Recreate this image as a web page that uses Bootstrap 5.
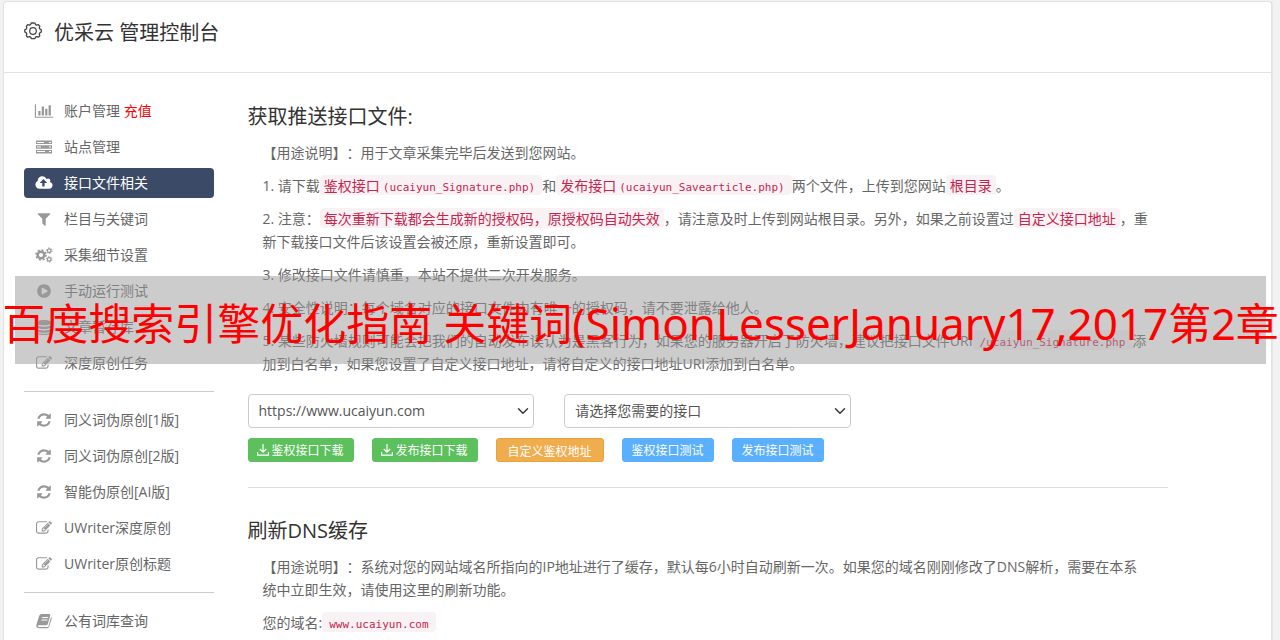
<!DOCTYPE html>
<html lang="zh-CN">
<head>
<meta charset="utf-8">
<meta name="viewport" content="width=device-width, initial-scale=1">
<title>优采云 管理控制台</title>
<link href="https://cdn.jsdelivr.net/npm/bootstrap@5.3.0/dist/css/bootstrap.min.css" rel="stylesheet">
<style>
body{background:#f2f2f2;color:#666;font:14px/23px "Open Sans","Noto Sans CJK SC",sans-serif;text-spacing-trim:space-all}
.page{padding:1px 8px 0 3px}
.panel{background:#fff;border:1px solid #e2e2e2;border-bottom:0;border-radius:4px 4px 0 0;box-shadow:1px 0 0 #e6e6e6;min-height:calc(100vh - 1px)}
.panel-top{height:71px;padding:15px 20px;border-bottom:1px solid #e2e2e2}
.panel-top h1{font-size:20px;line-height:32px;color:#333;font-weight:400}
.panel-main{padding:23px 20px 0}
.side{padding-right:15px}
.side .nav{gap:6px}
.side .nav-link{display:flex;align-items:center;height:30px;padding:0 10px 2px;border-radius:4px;color:#666;white-space:nowrap}
.side .nav-link svg{width:20px;height:16px;margin:2px 10px 0 0;fill:#999;flex:none}
.side .nav-link.active{background:#3b4a66;color:#fff}
.side .nav-link.active svg{fill:#fff}
.side hr{margin:7px 0;border-color:#ccc;opacity:1}
.side .recharge{color:#f00}
.content{margin-left:19px}
.content h2{font-size:20px;line-height:24px;color:#333;font-weight:400;margin:9px 0 12px}
.content p{margin:0 17px 10px 15px}
.content code{font:14px/18px "Noto Sans CJK SC",sans-serif;color:#c7254e;background:#f9f2f4;border-radius:4px;padding:0 4px}
.content code span{font:11px/18px "DejaVu Sans Mono",monospace;padding:0 3px}
.content .form-select{height:34px;padding:0 28px 0 10px;font-size:14px;line-height:32px;color:#555;border-color:#ccc;border-radius:4px;background-position:right 4px center;background-size:12px 12px}
.pickers{--bs-gutter-x:30px;padding-top:9px}
.tools{gap:18px;margin-top:10px}
.tools .btn{--bs-btn-padding-y:0;--bs-btn-padding-x:9px;--bs-btn-font-size:12px;--bs-btn-border-radius:3px;height:24px;line-height:20px;padding-top:2px;display:flex;align-items:center;white-space:nowrap;color:#fff}
.tools svg{width:12px;height:12px;margin:0 3px 2px 0}
.tools .b-green{padding-left:8px;background:#5cc05c;border-color:#5cc05c}
.tools .b-orange{padding:3px 11px 0;background:#f0ad4e;border-color:#eea236}
.tools .b-blue{background:#5aafff;border-color:#5aafff}
.split{margin:25px 0 31px;border-color:#ddd;opacity:1}
.notice{left:15px;right:14px;top:276px;height:88px;background:rgba(153,153,153,.5);color:#f00;pointer-events:none}
.notice-text{font:43px/94px "Noto Sans","Noto Sans CJK SC",sans-serif;white-space:nowrap;flex:none}
.notice-latin{font-size:44px}
</style>
</head>
<body class="position-relative overflow-x-hidden">
<svg class="d-none" xmlns="http://www.w3.org/2000/svg">
<symbol id="i-chart" viewBox="0 0 2048 1792"><path d="M640 896v512h-256v-512h256zm384-512v1024h-256v-1024h256zm1024 1152v128h-2048v-1536h128v1408h1920zm-640-896v768h-256v-768h256zm384-384v1152h-256v-1152h256z"/></symbol>
<symbol id="i-server" viewBox="0 0 16 16"><path fill-rule="evenodd" d="M0 1.500h16v3.600H0zM1 3v1h7V3zm12 0v1h2V3zM0 6.200h16v3.600H0zM1 7.500v1h4v-1zm12 0v1h2v-1zM0 10.900h16v3.600H0zM1 12v1h8v-1zm12 0v1h2v-1z"/></symbol>
<symbol id="i-cloud" viewBox="0 0 1920 1792"><path d="M1280 864q0-14-9-23l-352-352q-9-9-23-9t-23 9l-351 351q-10 12-10 24 0 14 9 23t23 9h224v352q0 13 9.500 22.500t22.500 9.500h192q13 0 22.500-9.500t9.500-22.500v-352h224q13 0 22.500-9.500t9.500-22.500zm640 288q0 159-112.500 271.500t-271.500 112.500h-1088q-185 0-316.500-131.500t-131.500-316.500q0-130 70-240t188-165q-2-30-2-43 0-212 150-362t362-150q156 0 285.500 87t188.500 231q71-62 166-62 106 0 181 75t75 181q0 76-41 138 130 31 213.500 135.500t83.500 238.500z"/></symbol>
<symbol id="i-filter" viewBox="0 0 1792 1792"><path d="M1595 295q17 41-14 70l-493 493v742q0 42-39 59-13 5-25 5-27 0-45-19l-256-256q-19-19-19-45v-486l-493-493q-31-29-14-70 17-39 59-39h1280q42 0 59 39z"/></symbol>
<symbol id="i-cogs" viewBox="0 0 18 16"><g fill="none" stroke="#999"><circle cx="6" cy="8" r="3.300" stroke-width="2.400"/><circle cx="6" cy="8" r="5" stroke-width="1.600" stroke-dasharray="1.960 1.960"/><circle cx="14.200" cy="3.700" r="1.800" stroke-width="1.300"/><circle cx="14.200" cy="3.700" r="2.800" stroke-width="1" stroke-dasharray="1.460 1.460"/><circle cx="14.200" cy="12.400" r="1.800" stroke-width="1.300"/><circle cx="14.200" cy="12.400" r="2.800" stroke-width="1" stroke-dasharray="1.460 1.460"/></g></symbol>
<symbol id="i-play" viewBox="0 0 1792 1792"><path d="M896 128q209 0 385.500 103t279.500 279.500 103 385.500-103 385.500-279.500 279.500-385.500 103-385.500-103-279.500-279.500-103-385.500 103-385.500 279.500-279.500 385.500-103zm384 823q32-18 32-55t-32-55l-544-320q-31-19-64-1-32 19-32 56v640q0 37 32 56 16 8 32 8 17 0 32-9z"/></symbol>
<symbol id="i-data" viewBox="0 0 16 16"><path d="M1 3.200C1 .2 15 .2 15 3.200v1C15 7 1 7 1 4.200zM1 6c2 2.300 12 2.300 14 0v2c0 2.800-14 2.800-14 0zm0 3.700c2 2.300 12 2.300 14 0v2c0 2.800-14 2.800-14 0zm0 3.600c2 2 12 2 14 0v.6c0 2.800-14 2.800-14 0z"/></symbol>
<symbol id="i-edit" viewBox="0 0 1792 1792"><path d="M888 1184l116-116-152-152-116 116v56h96v96h56zm440-720q-16-16-33 1l-350 350q-17 17-1 33t33-1l350-350q17-17 1-33zm80 594v190q0 119-84.500 203.500t-203.500 84.500h-832q-119 0-203.500-84.500t-84.500-203.500v-832q0-119 84.500-203.500t203.500-84.500h832q63 0 117 25 15 7 18 23 3 17-9 29l-49 49q-14 14-32 8-23-6-45-6h-832q-66 0-113 47t-47 113v832q0 66 47 113t113 47h832q66 0 113-47t47-113v-126q0-13 9-22l64-64q15-15 35-7t20 29zm-96-738l288 288-672 672h-288v-288zm444 132l-92 92-288-288 92-92q28-28 68-28t68 28l152 152q28 28 28 68t-28 68z"/></symbol>
<symbol id="i-refresh" viewBox="0 0 1792 1792"><path d="M1639 1056q0 5-1 7-64 268-268 434.500t-478 166.500q-146 0-282.500-55t-243.500-157l-129 129q-19 19-45 19t-45-19-19-45v-448q0-26 19-45t45-19h448q26 0 45 19t19 45-19 45l-137 137q71 66 161 102t187 36q134 0 250-65t186-179q11-17 53-117 8-23 30-23h192q13 0 22.500 9.500t9.500 22.500zm25-800v448q0 26-19 45t-45 19h-448q-26 0-45-19t-19-45 19-45l138-138q-148-137-349-137-134 0-250 65t-186 179q-11 17-53 117-8 23-30 23h-199q-13 0-22.500-9.500t-9.500-22.500v-7q65-268 270-434.500t480-166.500q146 0 284 55.500t245 156.500l130-129q19-19 45-19t45 19 19 45z"/></symbol>
<symbol id="i-book" viewBox="0 0 16 16"><path fill-rule="evenodd" d="M5.600 1h7.700q1.400 0 1 1.500L11.800 11q-.4 1.300-1.800 1.300H2.600q-1 0-.7.900.2.700 1.200.7h8.500q.7 0 .9-.7L15 4q1 .5.700 1.600L13.300 13.500q-.5 1.700-2.200 1.700H3q-2.300 0-2.700-2-.1-.9.200-1.700L3.200 2.700Q3.800 1 5.600 1zM6.300 4l-.3 1h6l.3-1zm-.7 2.500-.3 1h6l.3-1z"/></symbol>
<symbol id="i-down" viewBox="0 0 12 12"><path d="M6 0v8M2.800 5 6 8.200 9.200 5M.6 8v3.200h10.800V8" fill="none" stroke="#fff" stroke-width="1.200"/></symbol>
<symbol id="i-gear" viewBox="0 0 18 18"><path d="M9 .8l1.900.3.7 1.600 1 .5 1.800-.5 1.400 1.400-.5 1.700.5 1.100 1.500.8V10l-1.500.9-.5 1.200.5 1.700-1.400 1.400-1.700-.5-1.100.5-.8 1.500H7.500l-1-1.500-1.100-.5-1.700.5-1.400-1.500.5-1.600-.5-1.200L.8 10V7.900L2.300 7l.5-1.200-.5-1.700 1.400-1.400 1.700.5 1.100-.5L7.200 1z" fill="none" stroke="#444" stroke-width="1.300" stroke-linejoin="round"/><circle cx="9" cy="9" r="3.300" fill="none" stroke="#444" stroke-width="1.200"/></symbol>
</svg>

<div class="page">
<div class="panel">
  <header class="panel-top d-flex align-items-start">
    <h1 class="m-0 d-flex align-items-center"><svg width="18" height="18" class="me-2 mb-1 flex-shrink-0"><use href="#i-gear"/></svg><span class="ps-1">优采云 管理控制台</span></h1>
  </header>
  <div class="panel-main">
  <div class="row g-0">
    <aside class="col-2 side">
      <nav class="nav flex-column">
        <a class="nav-link" href="#"><svg><use href="#i-chart"/></svg>账户管理&nbsp;<span class="recharge">充值</span></a>
        <a class="nav-link" href="#"><svg><use href="#i-server"/></svg>站点管理</a>
        <a class="nav-link active" href="#" aria-current="page"><svg><use href="#i-cloud"/></svg>接口文件相关</a>
        <a class="nav-link" href="#"><svg><use href="#i-filter"/></svg>栏目与关键词</a>
        <a class="nav-link" href="#"><svg><use href="#i-cogs"/></svg>采集细节设置</a>
        <a class="nav-link" href="#"><svg><use href="#i-play"/></svg>手动运行测试</a>
        <a class="nav-link" href="#"><svg><use href="#i-data"/></svg>文章暂存库</a>
        <a class="nav-link" href="#"><svg><use href="#i-edit"/></svg>深度原创任务</a>
        <hr>
        <a class="nav-link" href="#"><svg><use href="#i-refresh"/></svg>同义词伪原创[1版]</a>
        <a class="nav-link" href="#"><svg><use href="#i-refresh"/></svg>同义词伪原创[2版]</a>
        <a class="nav-link" href="#"><svg><use href="#i-refresh"/></svg>智能伪原创[AI版]</a>
        <a class="nav-link" href="#"><svg><use href="#i-edit"/></svg>UWriter深度原创</a>
        <a class="nav-link" href="#"><svg><use href="#i-edit"/></svg>UWriter原创标题</a>
        <hr>
        <a class="nav-link" href="#"><svg><use href="#i-book"/></svg>公有词库查询</a>
      </nav>
    </aside>
    <main class="col-9 content">
      <section>
        <h2>获取推送接口文件:</h2>
        <p>【用途说明】：用于文章采集完毕后发送到您网站。</p>
        <p>1. 请下载<code>鉴权接口<span>(ucaiyun_Signature.php)</span></code>和<code>发布接口<span>(ucaiyun_Savearticle.php)</span></code>两个文件，上传到您网站<code>根目录</code>。</p>
        <p>2. 注意：<code>每次重新下载都会生成新的授权码，原授权码自动失效</code>，请注意及时上传到网站根目录。另外，如果之前设置过<code>自定义接口地址</code>，重新下载接口文件后该设置会被还原，重新设置即可。</p>
        <p>3. 修改接口文件请慎重，本站不提供二次开发服务。</p>
        <p>4. 安全性说明：每个域名对应的接口文件内有唯一的授权码，请不要泄露给他人。</p>
        <p>5. 某些防火墙规则可能会把我们的自动发布误认为是黑客行为，如果您的服务器开启了防火墙，建议把接口文件URI<code><span>/ucaiyun_Signature.php</span></code>添加到白名单，如果您设置了自定义接口地址，请将自定义的接口地址URI添加到白名单。</p>
        <div class="row pickers">
          <div class="col-4"><select class="form-select" aria-label="网站"><option>https://www.ucaiyun.com</option></select></div>
          <div class="col-4"><select class="form-select" aria-label="接口"><option>请选择您需要的接口</option></select></div>
        </div>
        <div class="tools d-flex">
          <button type="button" class="btn b-green"><svg><use href="#i-down"/></svg>鉴权接口下载</button>
          <button type="button" class="btn b-green"><svg><use href="#i-down"/></svg>发布接口下载</button>
          <button type="button" class="btn b-orange">自定义鉴权地址</button>
          <button type="button" class="btn b-blue">鉴权接口测试</button>
          <button type="button" class="btn b-blue">发布接口测试</button>
        </div>
      </section>
      <hr class="split">
      <section>
        <h2>刷新DNS缓存</h2>
        <p>【用途说明】：系统对您的网站域名所指向的IP地址进行了缓存，默认每6小时自动刷新一次。如果您的域名刚刚修改了DNS解析，需要在本系统中立即生效，请使用这里的刷新功能。</p>
        <p class="mb-0">您的域名:<code><span>www.ucaiyun.com</span></code></p>
      </section>
    </main>
  </div>
  </div>
</div>
</div>
<div class="notice position-absolute d-flex justify-content-center"><div class="notice-text">百度搜索引擎优化指南 关键词<span class="notice-latin">(SimonLesserJanuary17,2017</span>第2章</div></div>
<script src="https://cdn.jsdelivr.net/npm/bootstrap@5.3.0/dist/js/bootstrap.bundle.min.js"></script>
</body>
</html>
